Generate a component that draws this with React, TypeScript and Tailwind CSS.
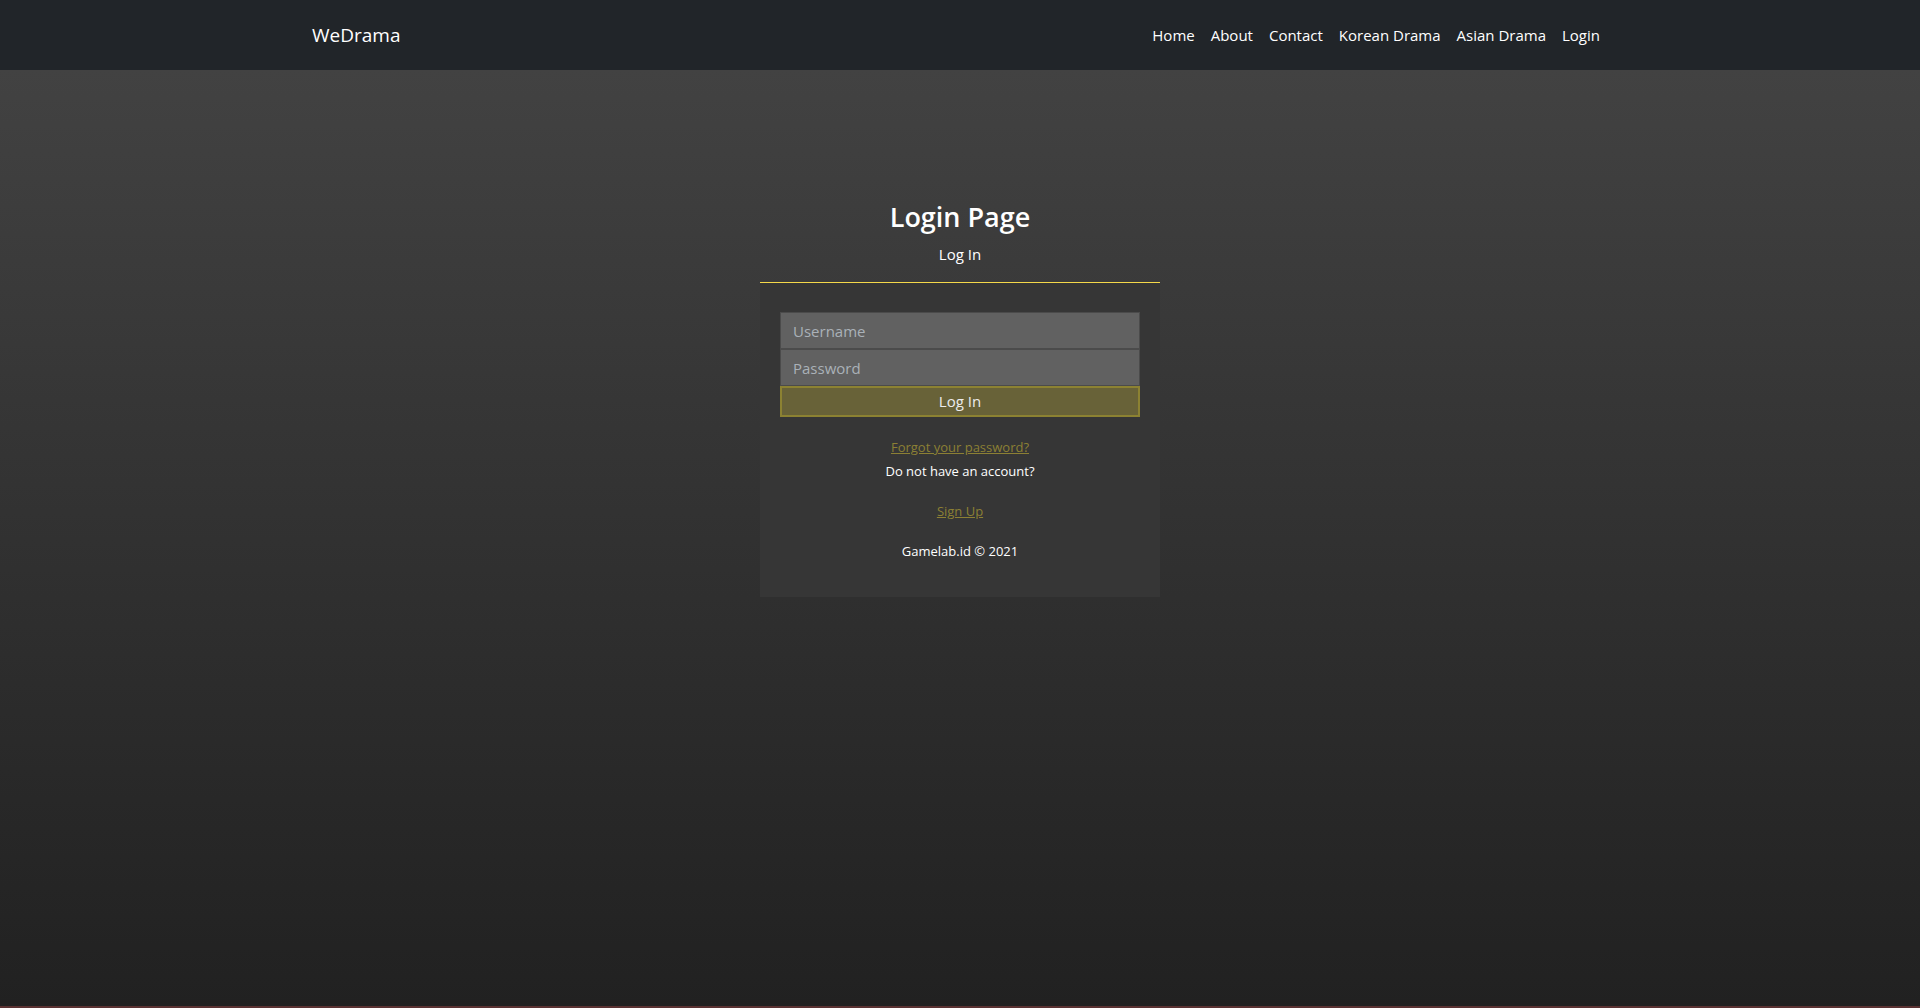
const links = ["Home", "About", "Contact", "Korean Drama", "Asian Drama", "Login"];

export default function App() {
  return (
    <div
      className="min-h-[1008px] flex flex-col border-b-2 border-[#5a3232]"
      style={{ fontFamily: "'Open Sans', 'Noto Sans', sans-serif" }}
    >
      <nav className="h-[70px] bg-[#212529] shrink-0">
        <div className="w-[1320px] mx-auto px-3 h-full flex items-center justify-between">
          <a className="text-[19px] text-white">WeDrama</a>
          <ul className="flex items-center">
            {links.map((l) => (
              <li key={l}>
                <a className="block px-2 text-[15px] text-white">{l}</a>
              </li>
            ))}
          </ul>
        </div>
      </nav>

      <main className="flex-1 bg-gradient-to-b from-[#424242] to-[#212121]">
        <div className="w-[400px] mx-auto pt-[125px]">
          <h2 className="text-center text-[27px] leading-[44px] font-semibold text-white">
            Login Page
          </h2>
          <p className="text-center text-[15px] leading-6 text-white mt-[3px]">Log In</p>

          <div className="mt-4 bg-[#363636] border-t border-[#f5d94a] px-5 pt-[29px] pb-[36px]">
            <input
              placeholder="Username"
              className="block w-full h-[37px] px-3 bg-[#616161] border border-[#4b4b4b] text-[15px] text-white placeholder:text-[#aab1b8] outline-none"
            />
            <input
              type="password"
              placeholder="Password"
              className="block w-full h-[37px] px-3 bg-[#616161] border border-[#4b4b4b] text-[15px] text-white placeholder:text-[#aab1b8] outline-none"
            />
            <button className="block w-full h-[31px] bg-[#686238] border-2 border-[#8c8232] text-[15px] text-[#ececec]">
              Log In
            </button>

            <div className="text-center text-[13px] mt-5">
              <a className="underline text-[#8c8034] leading-5">Forgot your password?</a>
              <p className="text-white mt-[3px] leading-5">Do not have an account?</p>
              <a className="block underline text-[#8c8034] mt-5 leading-5">Sign Up</a>
              <p className="text-white mt-5 leading-5">Gamelab.id © 2021</p>
            </div>
          </div>
        </div>
      </main>
    </div>
  );
}
